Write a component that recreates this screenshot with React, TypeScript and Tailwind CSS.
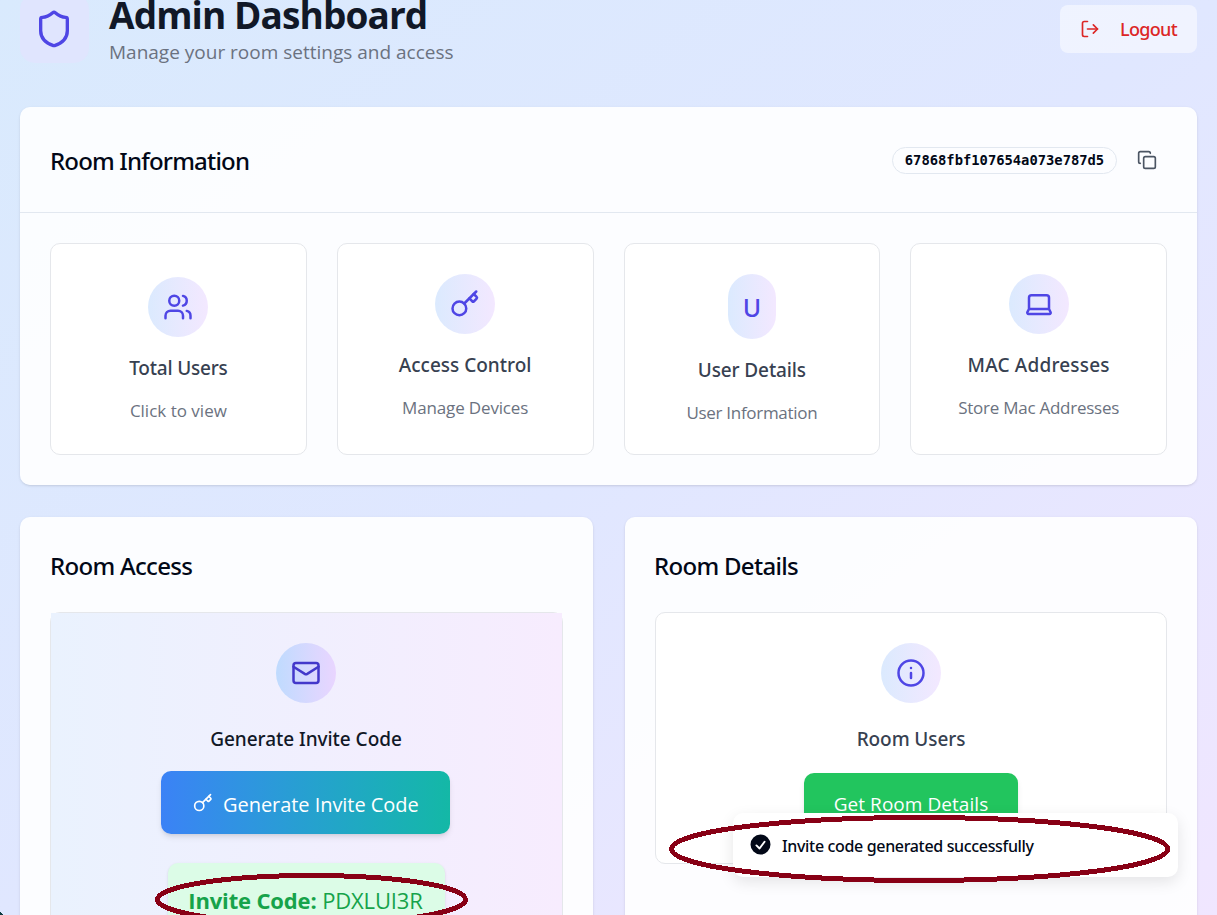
import type { ReactNode } from 'react';
import { Users, Key, Mail, Info, Copy, LogOut, Shield } from 'lucide-react';

function LaptopIcon() {
  return (
    <svg className="size-[30px]" viewBox="0 0 24 24" fill="none" stroke="currentColor" strokeWidth="2" strokeLinecap="round" strokeLinejoin="round">
      <path d="M20 16V7a2 2 0 0 0-2-2H6a2 2 0 0 0-2 2v9m16 0H4m16 0 1.28 2.55a1 1 0 0 1-.9 1.45H3.62a1 1 0 0 1-.9-1.45L4 16" />
    </svg>
  );
}

function Bubble({ children }: { children: ReactNode }) {
  return (
    <div className="flex size-[60px] items-center justify-center rounded-full bg-linear-to-r from-[#dbeafe] to-[#f3e8ff] text-[#4f46e5]">
      {children}
    </div>
  );
}

function Tile({ pad, icon, title, titleClass, note, noteClass }: { pad: string; icon: ReactNode; title: string; titleClass: string; note: string; noteClass: string }) {
  return (
    <div className={`flex h-[212px] flex-1 flex-col items-center rounded-[10px] border border-[#e5e7eb] bg-white ${pad}`}>
      {icon}
      <h3 className={`mt-4 font-['Noto_Sans',sans-serif] text-[19px] leading-[30px] font-medium whitespace-nowrap text-[#374151] ${titleClass}`}>{title}</h3>
      <p className={`mt-[15px] text-[17px] leading-[25px] whitespace-nowrap text-[#6b7280] ${noteClass}`}>{note}</p>
    </div>
  );
}

export default function App() {
  return (
    <div className="relative h-[915px] w-[1217px] overflow-hidden bg-linear-to-br from-[#d9eafd] via-[#e0e7ff] to-[#f0e6ff] px-5 font-['Open_Sans',sans-serif] text-[#020817]">
      <header className="-mt-[6px] flex h-[69px] items-center">
        <div className="flex size-[69px] items-center justify-center rounded-[15px] bg-[#e0e5fe] pr-[2px]">
          <Shield className="size-10 text-[#4f46e5]" />
        </div>
        <div className="ml-5 flex flex-col">
          <h1 className="text-[37px] leading-[44px] font-bold tracking-[-0.9px] text-[#111827]">Admin Dashboard</h1>
          <p className="-mb-px pt-[2px] text-[19px] leading-[27px] text-[#6b7280]">Manage your room settings and access</p>
        </div>
        <button className="ml-auto flex h-12 w-[137px] items-center justify-between rounded-[8px] bg-white/50 px-5 font-['Noto_Sans',sans-serif] text-[18px] font-medium text-[#dc2626]">
          <LogOut className="size-5" />
          <span className="pt-px tracking-[-0.65px]">Logout</span>
        </button>
      </header>

      <section className="mt-11 h-[378px] rounded-[10px] border border-transparent bg-white/90 shadow-sm">
        <div className="-mx-px flex h-[105px] items-center justify-between border-b border-[#e2e8f0] px-[30px]">
          <h2 className="pt-px font-['Noto_Sans',sans-serif] text-[24px] font-medium tracking-[-0.82px]">Room Information</h2>
          <div className="flex items-center">
            <span className="flex h-[27px] w-[225px] items-center justify-center rounded-full border border-[#e2e8f0] font-['DejaVu_Sans_Mono',monospace] text-[13.8px] font-bold">
              67868fbf107654a073e787d5
            </span>
            <Copy className="mr-[10px] ml-5 size-5 text-[#4b5563]" />
          </div>
        </div>
        <div className="flex gap-[30px] px-[29px] pt-[30px]">
          <Tile pad="pt-[33px]" icon={<Bubble><Users className="size-[30px]" /></Bubble>} title="Total Users" titleClass="tracking-[-0.2px]" note="Click to view" noteClass="tracking-[0px]" />
          <Tile pad="pt-[30px]" icon={<Bubble><Key className="size-[30px]" /></Bubble>} title="Access Control" titleClass="tracking-[0px]" note="Manage Devices" noteClass="tracking-[-0.15px]" />
          <Tile
            pad="pt-[30px]"
            icon={<div className="flex h-[65px] w-12 items-center justify-center rounded-full bg-linear-to-r from-[#dbeafe] to-[#f3e8ff] pt-[2px] font-['Noto_Sans',sans-serif] text-[25px] font-medium text-[#4f46e5]">U</div>}
            title="User Details" titleClass="tracking-[-0.12px]" note="User Information" noteClass="tracking-[-0.3px]"
          />
          <Tile pad="pt-[30px]" icon={<Bubble><LaptopIcon /></Bubble>} title="MAC Addresses" titleClass="tracking-[0.18px]" note="Store Mac Addresses" noteClass="tracking-[-0.25px]" />
        </div>
      </section>

      <div className="mt-8 flex gap-8">
        <section className="h-[460px] w-[573px] rounded-[10px] bg-white/90 px-[30px] pt-px shadow-sm">
          <h2 className="flex h-[94px] items-center pt-px font-['Noto_Sans',sans-serif] text-[24px] font-medium tracking-[-0.7px]">Room Access</h2>
          <div className="h-[400px] rounded-[10px] border border-[#e5e7eb]">
            <div className="flex h-full flex-col items-center bg-linear-to-r from-[#eaf2fe] to-[#f7ecfe] pt-[30px] pr-px">
              <div className="flex size-[60px] items-center justify-center rounded-full bg-linear-to-r from-[#bfdbfe] to-[#e9d5ff] text-[#4338ca]">
                <Mail className="size-[30px]" />
              </div>
              <h3 className="mt-[21px] font-['Noto_Sans',sans-serif] text-[19px] leading-[30px] font-medium tracking-[-0.04px] text-[#111827]">Generate Invite Code</h3>
              <button className="mt-[17px] mr-px flex h-[63px] w-[289px] items-center rounded-[10px] bg-linear-to-r from-[#3b82f6] to-[#14b8a6] pl-8 text-[20px] text-white shadow-md">
                <Key className="size-5" />
                <span className="ml-[10px] pt-[4px] tracking-[-0.05px] whitespace-nowrap">Generate Invite Code</span>
              </button>
              <div className="mt-[29px] flex h-[75px] w-[277px] items-center justify-center rounded-[10px] bg-[#dcfce7] text-[22px] whitespace-nowrap text-[#16a34a] shadow-sm">
                <p className="pr-px tracking-[-0.15px]"><strong className="font-bold">Invite Code:</strong> PDXLUI3R</p>
              </div>
            </div>
          </div>
        </section>

        <section className="h-[460px] w-[572px] rounded-[10px] bg-white/90 px-[30px] pt-px shadow-sm">
          <h2 className="-ml-px flex h-[94px] items-center pt-px font-['Noto_Sans',sans-serif] text-[24px] font-medium tracking-[-0.7px]">Room Details</h2>
          <div className="flex h-[252px] flex-col items-center rounded-[10px] border border-[#e5e7eb] bg-white pt-[30px]">
            <Bubble><Info className="size-[30px]" /></Bubble>
            <h3 className="mt-[21px] font-['Noto_Sans',sans-serif] text-[19px] leading-[30px] font-medium tracking-[-0.1px] text-[#374151]">Room Users</h3>
            <button className="mt-[19px] flex h-[63px] w-[214px] items-center justify-center rounded-[10px] bg-[#22c55e] text-[19px] text-white shadow-md">
              <span className="tracking-[0.05px] whitespace-nowrap">Get Room Details</span>
            </button>
          </div>
        </section>
      </div>

      <div className="absolute top-[813px] left-[733px] flex h-16 w-[445px] items-center rounded-[10px] bg-white pl-[15px] shadow-[0_5px_15px_rgba(0,0,0,0.1)]">
        <svg className="mb-px size-[25px]" viewBox="0 0 20 20" fill="currentColor" fillRule="evenodd">
          <path d="M10 18a8 8 0 100-16 8 8 0 000 16zm3.857-9.809a.75.75 0 00-1.214-.882l-3.483 4.79-1.88-1.88a.75.75 0 10-1.06 1.061l2.5 2.5a.75.75 0 001.137-.089l4-5.5z" />
        </svg>
        <span className="ml-[9px] pt-[2px] font-['Noto_Sans',sans-serif] text-[16px] font-medium tracking-[-0.34px] whitespace-nowrap">Invite code generated successfully</span>
      </div>

      <svg className="pointer-events-none absolute inset-0" width="1217" height="915" fill="none" stroke="#880015" strokeWidth="5" shapeRendering="crispEdges">
        <ellipse cx="311.5" cy="899.5" rx="154" ry="24" />
        <ellipse cx="919.6" cy="849" rx="248" ry="31.5" />
        <path d="M0 912l3 3H0z" fill="#0b3b40" stroke="none" />
      </svg>
    </div>
  );
}
